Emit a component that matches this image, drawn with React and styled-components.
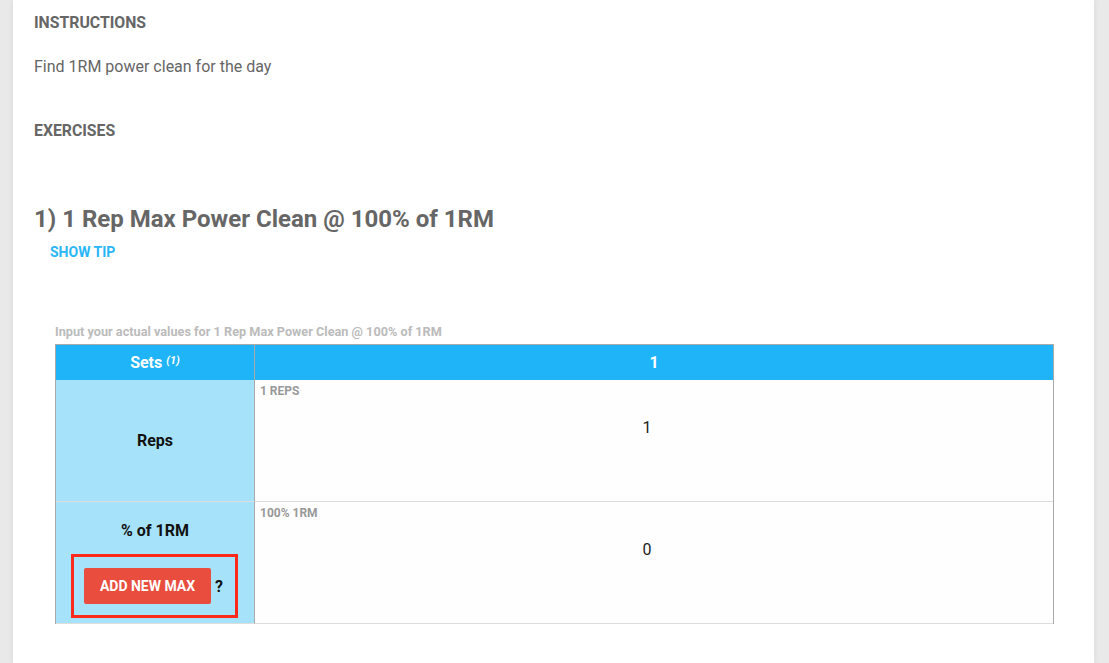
import React from "react";
import styled, { createGlobalStyle } from "styled-components";

const GlobalStyle = createGlobalStyle`
  html, body {
    margin: 0;
    padding: 0;
    background: #e9e9e9;
    font-family: Roboto, "Noto Sans", Arial, sans-serif;
  }
`;

const Page = styled.div`
  padding: 0 15px 0 13px;
  min-height: 663px;
  box-sizing: border-box;
`;

const Card = styled.div`
  background: #fff;
  min-height: 663px;
  padding: 14px 40px 40px 21px;
  box-sizing: border-box;
  box-shadow: 0 0 6px rgba(0, 0, 0, 0.08);
`;

const SectionLabel = styled.h4`
  margin: 0;
  font-size: 15.8px;
  font-weight: 700;
  color: #666;
  line-height: 18px;
`;

const Paragraph = styled.p`
  margin: 26px 0 46px;
  font-size: 16px;
  color: #666;
  line-height: 18px;
`;

const ExerciseTitle = styled.h2`
  margin: 65px 0 0;
  font-size: 24px;
  font-weight: 700;
  color: #666;
  line-height: 28px;
`;

const TipLink = styled.a`
  display: inline-block;
  margin: 11px 0 0 16px;
  font-size: 14px;
  font-weight: 700;
  color: #29b6f6;
  line-height: 16px;
  cursor: pointer;
`;

const Caption = styled.div`
  margin: 64px 0 0 21px;
  font-size: 12.7px;
  font-weight: 700;
  color: #bbb;
  line-height: 14px;
`;

const Table = styled.div`
  margin: 5px 0 0 21px;
  display: grid;
  grid-template-columns: 198px 1fr;
  grid-template-rows: 35px 122px 122px;
  border-top: 1px solid #aaa;
  border-left: 1px solid #aaa;
  border-right: 1px solid #aaa;
`;

const HeadCell = styled.div`
  background: #1eb4f7;
  color: #fff;
  font-size: 16px;
  font-weight: 700;
  display: flex;
  align-items: center;
  justify-content: center;
  border-left: ${(p) => (p.$divider ? "1px solid #aaa" : "none")};
`;

const Sup = styled.sup`
  font-size: 11px;
  font-style: italic;
  margin-left: 4px;
  position: relative;
  top: -2px;
`;

const SideCell = styled.div`
  background: #a6e3fb;
  color: #111;
  font-size: 16px;
  font-weight: 700;
  display: flex;
  flex-direction: column;
  align-items: center;
  justify-content: ${(p) => (p.$top ? "flex-start" : "center")};
  padding-top: ${(p) => (p.$top ? "19px" : "0")};
  border-bottom: 1px solid #ddd;
`;

const ValueCell = styled.div`
  background: #fefefe;
  border-left: 1px solid #aaa;
  border-bottom: 1px solid #ddd;
  padding: 4px 5px 0;
`;

const ValueLabel = styled.div`
  font-size: 12px;
  font-weight: 700;
  color: #999;
  line-height: 14px;
`;

const Value = styled.div`
  margin-top: 20px;
  padding-right: 14px;
  text-align: center;
  font-size: 16px;
  line-height: 19px;
  color: #222;
`;

const SideTitle = styled.div`
  line-height: 20px;
`;

const Highlight = styled.div`
  margin: 13px 1px 0 0;
  border: 3px solid #fd2a1c;
  padding: 11px 12px 11px 10px;
  display: flex;
  align-items: center;
  gap: 4px;
`;

const MaxButton = styled.button`
  height: 36px;
  width: 127px;
  padding: 0;
  border: none;
  border-radius: 2px;
  background: #e84d3d;
  color: #fff;
  font-family: inherit;
  font-size: 14px;
  font-weight: 700;
  cursor: pointer;
`;

const Help = styled.span`
  font-size: 16px;
  font-weight: 700;
  color: #111;
`;

export default function App() {
  return (
    <>
      <GlobalStyle />
      <Page>
        <Card>
          <SectionLabel>INSTRUCTIONS</SectionLabel>
          <Paragraph>Find 1RM power clean for the day</Paragraph>
          <SectionLabel>EXERCISES</SectionLabel>
          <ExerciseTitle>1) 1 Rep Max Power Clean @ 100% of 1RM</ExerciseTitle>
          <TipLink>SHOW TIP</TipLink>
          <Caption>Input your actual values for 1 Rep Max Power Clean @ 100% of 1RM</Caption>
          <Table>
            <HeadCell>
              Sets<Sup>(1)</Sup>
            </HeadCell>
            <HeadCell $divider>1</HeadCell>
            <SideCell>Reps</SideCell>
            <ValueCell>
              <ValueLabel>1 REPS</ValueLabel>
              <Value>1</Value>
            </ValueCell>
            <SideCell $top>
              <SideTitle>% of 1RM</SideTitle>
              <Highlight>
                <MaxButton>ADD NEW MAX</MaxButton>
                <Help>?</Help>
              </Highlight>
            </SideCell>
            <ValueCell>
              <ValueLabel>100% 1RM</ValueLabel>
              <Value>0</Value>
            </ValueCell>
          </Table>
        </Card>
      </Page>
    </>
  );
}
